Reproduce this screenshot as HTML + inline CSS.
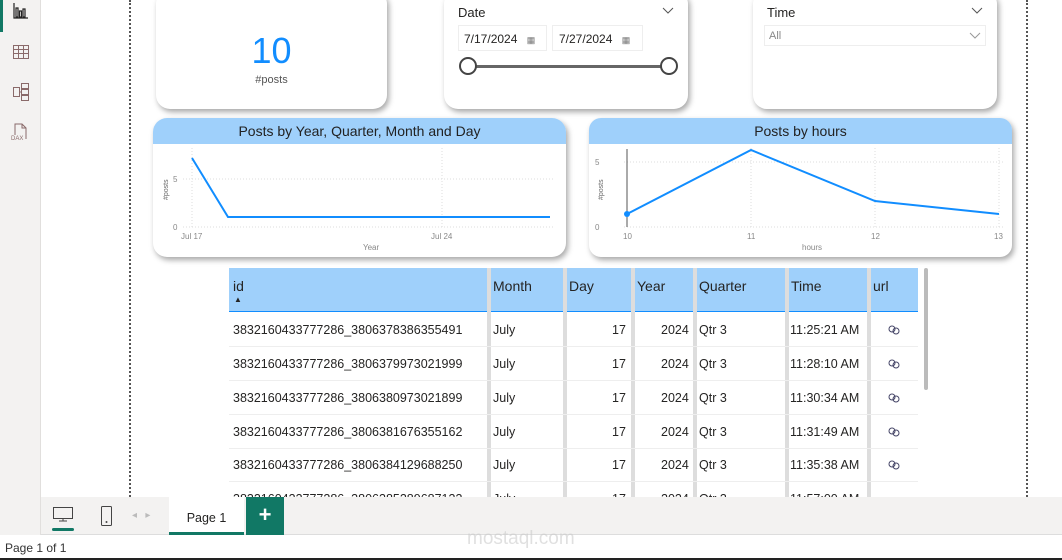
<!DOCTYPE html>
<html><head><meta charset="utf-8"><style>
*{margin:0;padding:0;box-sizing:border-box}
body{width:1062px;height:560px;overflow:hidden;background:#fff;font-family:"Liberation Sans",sans-serif;position:relative;color:#252423}
.abs{position:absolute}
.card{position:absolute;background:#fff;border-radius:14px;box-shadow:2px 3px 6px rgba(0,0,0,.35);overflow:hidden}
.hdr{background:#9fd0fb;height:26px;text-align:center;font-size:14px;line-height:26px;color:#222}
.row{position:absolute;left:0;width:689px;height:34px;border-bottom:1px solid #eee;font-size:12.5px;line-height:34px}
.row span{position:absolute;top:0;white-space:nowrap}
.sep{position:absolute;top:0;width:4px;height:229px;background:#ddd}
.link{position:absolute;left:658px;top:12px}
</style></head><body>
<!-- sidebar -->
<div class="abs" style="left:0;top:0;width:41px;height:535px;background:#f3f2f1;border-right:1px solid #e1dfdd"></div>
<div class="abs" style="left:0;top:0;width:3px;height:32px;background:#117865"></div>
<svg class="abs" style="left:12px;top:2px" width="18" height="18" viewBox="0 0 18 18" fill="none" stroke="#222" stroke-width="1.2"><path d="M2 1v15h14M4 6h2v9H4zM7.5 9h2v6h-2zM11 7h2v8h-2z"/></svg>
<svg class="abs" style="left:12px;top:43px" width="18" height="18" viewBox="0 0 18 18" fill="none" stroke="#8a6a6a" stroke-width="1"><path d="M1.5 2.5h15v13h-15zM1.5 6.5h15M1.5 10.5h15M6.5 2.5v13M11.5 2.5v13"/></svg>
<svg class="abs" style="left:12px;top:82px" width="18" height="20" viewBox="0 0 18 20" fill="none" stroke="#8a6a6a" stroke-width="1"><path d="M1.5 5.5h6v9h-6zM9.5 1.5h7v5h-7zM9.5 7.5h7v5h-7zM9.5 13.5h7v5h-7zM7.5 10h2"/></svg>
<svg class="abs" style="left:10px;top:122px" width="20" height="20" viewBox="0 0 20 20" fill="none" stroke="#8a6a6a" stroke-width="1"><path d="M5 13V2h7l4 4v11M12 2v4h4"/><text x="1" y="18" font-size="6" fill="#8a6a6a" stroke="none" font-family="Liberation Sans">DAX</text></svg>
<!-- dotted borders -->
<div class="abs" style="left:129px;top:0;height:497px;border-left:2px dotted #555"></div>
<div class="abs" style="left:1026px;top:0;height:497px;border-left:2px dotted #555"></div>

<!-- KPI -->
<div class="card" style="left:156px;top:-10px;width:231px;height:119px">
<div class="abs" style="left:0;width:231px;top:40px;text-align:center;font-size:36px;color:#118dff">10</div>
<div class="abs" style="left:0;width:231px;top:84px;text-align:center;font-size:11px;color:#555">#posts</div></div>
<!-- Date -->
<div class="card" style="left:444px;top:-10px;width:244px;height:119px">
<div class="abs" style="left:14px;top:15px;font-size:13px">Date</div>
<svg class="abs" style="left:218px;top:17px" width="12" height="8"><path d="M1 1l5 5 5-5" fill="none" stroke="#555"/></svg>
<div class="abs" style="left:14px;top:35px;width:89px;height:26px;border:1px solid #eee;font-size:12px;padding:6px 5px">7/17/2024 <span style="font-size:9px;color:#777;margin-left:6px">▦</span></div>
<div class="abs" style="left:108px;top:35px;width:91px;height:26px;border:1px solid #eee;font-size:12px;padding:6px 6px">7/27/2024 <span style="font-size:9px;color:#777;margin-left:6px">▦</span></div>
<div class="abs" style="left:24px;top:75px;width:200px;height:3px;background:#666"></div>
<div class="abs" style="left:15px;top:67px;width:18px;height:18px;border-radius:50%;border:2px solid #444;background:#fff"></div>
<div class="abs" style="left:216px;top:67px;width:18px;height:18px;border-radius:50%;border:2px solid #444;background:#fff"></div>
</div>
<!-- Time -->
<div class="card" style="left:753px;top:-10px;width:244px;height:119px">
<div class="abs" style="left:14px;top:15px;font-size:13px">Time</div>
<svg class="abs" style="left:218px;top:17px" width="12" height="8"><path d="M1 1l5 5 5-5" fill="none" stroke="#555"/></svg>
<div class="abs" style="left:11px;top:35px;width:222px;height:21px;border:1px solid #eee;font-size:11px;color:#888;padding:4px 4px">All</div>
<svg class="abs" style="left:216px;top:42px" width="12" height="8"><path d="M1 1l5 5 5-5" fill="none" stroke="#999"/></svg>
</div>

<!-- Chart 1 -->
<div class="card" style="left:153px;top:118px;width:413px;height:139px">
<div class="hdr">Posts by Year, Quarter, Month and Day</div>
<svg class="abs" style="left:0;top:0" width="413" height="139">
<g stroke="#ddd" stroke-dasharray="1,2"><line x1="30" y1="61" x2="400" y2="61"/><line x1="30" y1="109" x2="400" y2="109"/><line x1="39" y1="30" x2="39" y2="109"/><line x1="289" y1="30" x2="289" y2="109"/></g>
<polyline points="39,40 75,99 397,99" fill="none" stroke="#118dff" stroke-width="2"/>
<g font-size="8" fill="#888" font-family="Liberation Sans"><text x="20" y="64">5</text><text x="20" y="112">0</text><text x="28" y="121">Jul 17</text><text x="278" y="121">Jul 24</text><text x="210" y="132">Year</text>
<text transform="translate(15,82) rotate(-90)" font-size="7" fill="#666">#posts</text></g></svg></div>

<!-- Chart 2 -->
<div class="card" style="left:589px;top:118px;width:423px;height:139px;border-radius:12px">
<div class="hdr">Posts by hours</div>
<svg class="abs" style="left:0;top:0" width="423" height="139">
<g stroke="#ddd" stroke-dasharray="1,2"><line x1="35" y1="44" x2="415" y2="44"/><line x1="35" y1="109" x2="415" y2="109"/><line x1="162" y1="30" x2="162" y2="109"/><line x1="286" y1="30" x2="286" y2="109"/><line x1="410" y1="30" x2="410" y2="109"/></g>
<line x1="38" y1="31" x2="38" y2="109" stroke="#555"/>
<polyline points="38,96 162,32 286,83 410,96" fill="none" stroke="#118dff" stroke-width="2"/>
<circle cx="38" cy="96" r="3" fill="#118dff"/>
<g font-size="8" fill="#888" font-family="Liberation Sans"><text x="6" y="47">5</text><text x="6" y="112">0</text><text x="34" y="121">10</text><text x="158" y="121">11</text><text x="282" y="121">12</text><text x="405" y="121">13</text><text x="213" y="132">hours</text>
<text transform="translate(14,82) rotate(-90)" font-size="7" fill="#666">#posts</text></g></svg></div>

<!-- Table -->
<div class="abs" style="left:229px;top:268px;width:690px;height:229px;overflow:hidden">
<div class="abs" style="left:0;top:0;width:689px;height:44px;background:#9fd0fb;border-bottom:1px solid #118dff;font-size:14px">
<span class="abs" style="left:4px;top:10px">id</span><span class="abs" style="left:5px;top:27px;font-size:8px">▲</span>
<span class="abs" style="left:264px;top:10px">Month</span>
<span class="abs" style="left:340px;top:10px">Day</span>
<span class="abs" style="left:408px;top:10px">Year</span>
<span class="abs" style="left:470px;top:10px">Quarter</span>
<span class="abs" style="left:562px;top:10px">Time</span>
<span class="abs" style="left:644px;top:10px">url</span>
</div>
<div class="sep" style="left:258px"></div><div class="sep" style="left:334px"></div><div class="sep" style="left:402px"></div><div class="sep" style="left:464px"></div><div class="sep" style="left:556px"></div><div class="sep" style="left:638px"></div>

<div class="row" style="top:45px"><span style="left:4px">3832160433777286_3806378386355491</span><span style="left:264px">July</span><span style="left:383px">17</span><span style="left:432px">2024</span><span style="left:470px">Qtr 3</span><span style="left:561px">11:25:21 AM</span><svg class="link" width="14" height="10" fill="none" stroke="#446"><circle cx="5" cy="4" r="3"/><circle cx="9" cy="6" r="3"/></svg></div>
<div class="row" style="top:79px"><span style="left:4px">3832160433777286_3806379973021999</span><span style="left:264px">July</span><span style="left:383px">17</span><span style="left:432px">2024</span><span style="left:470px">Qtr 3</span><span style="left:561px">11:28:10 AM</span><svg class="link" width="14" height="10" fill="none" stroke="#446"><circle cx="5" cy="4" r="3"/><circle cx="9" cy="6" r="3"/></svg></div>
<div class="row" style="top:113px"><span style="left:4px">3832160433777286_3806380973021899</span><span style="left:264px">July</span><span style="left:383px">17</span><span style="left:432px">2024</span><span style="left:470px">Qtr 3</span><span style="left:561px">11:30:34 AM</span><svg class="link" width="14" height="10" fill="none" stroke="#446"><circle cx="5" cy="4" r="3"/><circle cx="9" cy="6" r="3"/></svg></div>
<div class="row" style="top:147px"><span style="left:4px">3832160433777286_3806381676355162</span><span style="left:264px">July</span><span style="left:383px">17</span><span style="left:432px">2024</span><span style="left:470px">Qtr 3</span><span style="left:561px">11:31:49 AM</span><svg class="link" width="14" height="10" fill="none" stroke="#446"><circle cx="5" cy="4" r="3"/><circle cx="9" cy="6" r="3"/></svg></div>
<div class="row" style="top:180px"><span style="left:4px">3832160433777286_3806384129688250</span><span style="left:264px">July</span><span style="left:383px">17</span><span style="left:432px">2024</span><span style="left:470px">Qtr 3</span><span style="left:561px">11:35:38 AM</span><svg class="link" width="14" height="10" fill="none" stroke="#446"><circle cx="5" cy="4" r="3"/><circle cx="9" cy="6" r="3"/></svg></div>
<div class="row" style="top:214px;border:none"><span style="left:4px">3832160433777286_3806385289687133</span><span style="left:264px">July</span><span style="left:383px">17</span><span style="left:432px">2024</span><span style="left:470px">Qtr 3</span><span style="left:561px">11:57:00 AM</span></div>
</div>
<div class="abs" style="left:924px;top:268px;width:4px;height:122px;background:#bbb;border-radius:2px"></div>

<!-- bottom tab bar -->
<div class="abs" style="left:41px;top:497px;width:1021px;height:38px;background:#f3f2f1;border-bottom:1px solid #ddd"></div>
<svg class="abs" style="left:52px;top:506px" width="22" height="16" fill="none" stroke="#444"><rect x="1.5" y="1.5" width="19" height="11"/><path d="M11 12.5v2M7 15h8"/></svg>
<div class="abs" style="left:52px;top:528px;width:22px;height:3px;background:#117865;border-radius:2px"></div>
<svg class="abs" style="left:100px;top:505px" width="14" height="22" fill="none" stroke="#444"><rect x="1.5" y="1.5" width="10" height="19" rx="1"/><circle cx="6.5" cy="17" r=".5"/></svg>
<div class="abs" style="left:132px;top:510px;font-size:10px;color:#bbb">◂ &nbsp; ▸</div>
<div class="abs" style="left:169px;top:497px;width:75px;height:38px;background:#fff;font-size:12.5px;text-align:center;line-height:42px;border-bottom:3px solid #117865">Page 1</div>
<div class="abs" style="left:246px;top:497px;width:38px;height:38px;background:#117865;color:#fff;font-size:22px;font-weight:bold;text-align:center;line-height:36px">+</div>
<div class="abs" style="left:5px;top:541px;font-size:12px;color:#333">Page 1 of 1</div>
<div class="abs" style="left:467px;top:528px;font-size:19px;color:#ccc;opacity:.6">mostaql.com</div>
<div class="abs" style="left:0;top:558px;width:1062px;height:2px;background:#222"></div>
</body></html>
